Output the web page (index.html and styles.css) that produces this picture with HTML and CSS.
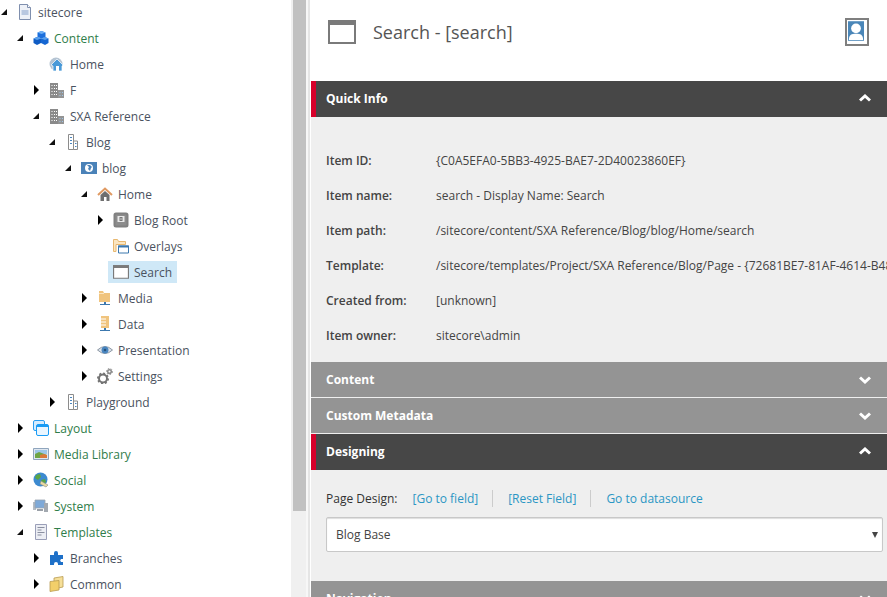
FILE: index.html
```html
<!DOCTYPE html>
<html lang="en">
  <head>
    <meta charset="UTF-8" />
    <title>Search - [search]</title>
    <link rel="stylesheet" href="styles.css">
  </head>
  <body>
    <div class="shell">
      <div class="tree">
        <div class="row"><span class="tog open"></span><svg class="ico" viewBox="0 0 16 16"><path d="M2.500 .5h8l3 3v12h-11z" fill="#eef1f7" stroke="#7f8fae"/><path d="M10.500 .5v3h3" fill="#fff" stroke="#7f8fae"/><path d="M4.500 6h7v5h-7z" fill="#b9c8e0"/></svg><span class="lbl">sitecore</span></div>
        <div class="row d1"><span class="tog open"></span><svg class="ico" viewBox="0 0 16 16"><path d="M4.500 2.500L8.500 1l4 1.500v4.500l-4 1.500-4-1.500z" fill="#1c6fdc"/><path d="M4.500 2.500L8.500 1l4 1.500-4 1.500z" fill="#6db0f5"/><path d="M.5 8.500L4 7l4 1.500V13l-4 2-3.500-2z" fill="#0f5cc4"/><path d="M.5 8.500L4 7l4 1.500L4 10z" fill="#5aa2ee"/><path d="M8 8.500L12 7l3.500 1.500V13L12 15l-4-2z" fill="#1566d2"/><path d="M8 8.500L12 7l3.500 1.500L12 10z" fill="#5aa2ee"/></svg><span class="lbl green">Content</span></div>
        <div class="row d2"><span class="tog"></span><svg class="ico" viewBox="0 0 16 16"><circle cx="7" cy="8" r="6.500" fill="#b5c4d3"/><path d="M2 9l6-6 6 6-1 1v5H4v-5z" fill="#4a9ad8" stroke="#fff" stroke-width=".7"/><path d="M7 10h3v5H7z" fill="#fff"/></svg><span class="lbl">Home</span></div>
        <div class="row d2"><span class="tog shut"></span><svg class="ico" viewBox="0 0 16 16"><use href="#bldg"/></svg><span class="lbl">F</span></div>
        <div class="row d2"><span class="tog open"></span><svg class="ico" viewBox="0 0 16 16"><use href="#bldg"/></svg><span class="lbl">SXA Reference</span></div>
        <div class="row d3"><span class="tog open"></span><svg class="ico" viewBox="0 0 16 16"><path d="M3.500 .5h5v15h-5zM8.500 7h4v8.500h-4z" fill="#fff" stroke="#8c8c8c"/><path d="M5 3h2v1H5zM5 6h2v1H5zM5 9h2v1H5zM10 9h1.500v1H10zM10 12h1.500v1H10z" fill="#4a86c0"/></svg><span class="lbl">Blog</span></div>
        <div class="row d4"><span class="tog open"></span><svg class="ico wide" viewBox="0 0 16 12"><path d="M0 0h16v12H0z" fill="#4a82b8"/><circle cx="8" cy="6" r="4" fill="#fff"/><path d="M6 3l2 2-1 2 2 2 1-3 1-1-2-2z" fill="#4a82b8"/></svg><span class="lbl">blog</span></div>
        <div class="row d5"><span class="tog open"></span><svg class="ico" viewBox="0 0 16 16"><path d="M1 9l7-6.500L15 9" fill="none" stroke="#e09a62" stroke-width="2"/><path d="M3.500 9L8 5l4.500 4v6h-9z" fill="#6f6f6f"/><path d="M7 11h2.500v4H7z" fill="#fff"/></svg><span class="lbl">Home</span></div>
        <div class="row d6"><span class="tog shut"></span><svg class="ico" viewBox="0 0 16 16"><rect x="1.500" y="1.500" width="13" height="13" rx="1.500" fill="#8c8c8c" stroke="#808080" stroke-width="2"/><path d="M4.500 4h7v6h-7z" fill="#e8e8e8"/><path d="M6.500 5h3v4h-3z" fill="#777"/><path d="M7.500 6h1v.7h-1zM7.500 7.300h1V8h-1z" fill="#e8e8e8"/></svg><span class="lbl">Blog Root</span></div>
        <div class="row d6"><span class="tog"></span><svg class="ico" viewBox="0 0 16 16"><path d="M.5 1.500h4l1 2h7v3H3v7H.5z" fill="#fbe6c2" stroke="#e8b870"/><path d="M5.500 8h10v7h-10z" fill="#fff" stroke="#3c78ae"/><path d="M5 7.500h11v2H5z" fill="#3c78ae"/></svg><span class="lbl">Overlays</span></div>
        <div class="row d6"><span class="tog"></span><span class="selected"><svg class="ico" viewBox="0 0 16 16"><use href="#win"/></svg><span class="lbl">Search</span></span></div>
        <div class="row d5"><span class="tog shut"></span><svg class="ico" viewBox="0 0 16 16"><path d="M2 1h4l1 2h6v9H2z" fill="#f0c47e"/><path d="M2 3h5v1H2z" fill="#fbe6c2"/><path d="M7 12h2v2H7zM3 14h10v1H3z" fill="#3c78ae"/></svg><span class="lbl">Media</span></div>
        <div class="row d5"><span class="tog shut"></span><svg class="ico" viewBox="0 0 16 16"><path d="M4 0h8v12H4z" fill="#f0c47e"/><path d="M4 3h5M4 6h5M4 9h5" stroke="#fff"/><path d="M7 12h2v2H7zM3 14h10v1H3z" fill="#3c78ae"/></svg><span class="lbl">Data</span></div>
        <div class="row d5"><span class="tog shut"></span><svg class="ico" viewBox="0 0 16 16"><path d="M.5 8Q8 1 15.500 8 8 15 .5 8z" fill="#dde3ea" stroke="#8a96a3"/><circle cx="8" cy="8" r="3.500" fill="#4a86c0"/><circle cx="8" cy="8" r="1.300" fill="#26527c"/></svg><span class="lbl">Presentation</span></div>
        <div class="row d5"><span class="tog shut"></span><svg class="ico" viewBox="0 0 16 16"><circle cx="6" cy="10.500" r="4" fill="none" stroke="#737373" stroke-width="2"/><circle cx="6" cy="10.500" r="5.200" fill="none" stroke="#737373" stroke-width="1.600" stroke-dasharray="2 2"/><circle cx="12.500" cy="3.500" r="1.800" fill="none" stroke="#8a8a8a" stroke-width="1.500"/><circle cx="12.500" cy="3.500" r="3" fill="none" stroke="#8a8a8a" stroke-width="1" stroke-dasharray="1.500 1.500"/></svg><span class="lbl">Settings</span></div>
        <div class="row d3"><span class="tog shut"></span><svg class="ico" viewBox="0 0 16 16"><path d="M3.500 .5h5v15h-5zM8.500 7h4v8.500h-4z" fill="#fff" stroke="#8c8c8c"/><path d="M5 3h2v1H5zM5 6h2v1H5zM5 9h2v1H5zM10 9h1.500v1H10zM10 12h1.500v1H10z" fill="#4a86c0"/></svg><span class="lbl">Playground</span></div>
        <div class="row d1"><span class="tog shut"></span><svg class="ico" viewBox="0 0 16 16"><rect x=".5" y=".5" width="11" height="10" rx="1.500" fill="#d5ecff" stroke="#2a9df0"/><rect x="3.500" y="4.500" width="12" height="11" rx="1.500" fill="#eaf6ff" stroke="#1a9cf5"/><path d="M4 5h11v2H4z" fill="#1a9cf5"/></svg><span class="lbl green">Layout</span></div>
        <div class="row d1"><span class="tog shut"></span><svg class="ico" viewBox="0 0 16 16"><path d="M.5 2.500h15v11H.5z" fill="#dfe7f0" stroke="#8fa5bd"/><path d="M2 4h12v4H2z" fill="#9cc6e8"/><path d="M2 8l4-2 8 3v3H2z" fill="#6fa544"/><path d="M7 9l4-1 3 1v3H7z" fill="#d9783a"/></svg><span class="lbl green">Media Library</span></div>
        <div class="row d1"><span class="tog shut"></span><svg class="ico" viewBox="0 0 16 16"><circle cx="7.500" cy="7.500" r="7" fill="#3c8ad0"/><path d="M3 3l4-1 1 3-3 3-3-2zM8 8l4-1 1 3-3 3z" fill="#5aa544"/><path d="M8 9l7 4-2 2-6-3z" fill="#e8d9a0" stroke="#8c8c8c" stroke-width=".6"/></svg><span class="lbl green">Social</span></div>
        <div class="row d1"><span class="tog shut"></span><svg class="ico" viewBox="0 0 16 16"><path d="M0 4h3v8H0z" fill="#b5bcc4"/><path d="M2 2h10v8H2z" fill="#7ea9d8" stroke="#9aa5b0" stroke-width=".8"/><path d="M11 5h4v9h-4z" fill="#a3a9b0"/><path d="M4 11h6v2H4z" fill="#9aa0a8"/></svg><span class="lbl green">System</span></div>
        <div class="row d1"><span class="tog open"></span><svg class="ico" viewBox="0 0 16 16"><path d="M2.500 .5h11v15h-11z" fill="#eceef4" stroke="#9a9fb8"/><path d="M4.500 3.500h7M4.500 6h4M4.500 8.500h7M4.500 11h4" stroke="#8a8fa0"/></svg><span class="lbl green">Templates</span></div>
        <div class="row d2"><span class="tog shut"></span><svg class="ico" viewBox="0 0 16 16"><path d="M1 5h4V3a2 2 0 0 1 4 0v2h5v4h-2a2 2 0 0 0 0 3h2v3H9v-1a2 2 0 0 0-4 0v1H1z" fill="#1e70c8"/></svg><span class="lbl">Branches</span></div>
        <div class="row d2"><span class="tog shut"></span><svg class="ico" viewBox="0 0 16 16"><path d="M5 2l9-1.500V11L5 13z" fill="#f6df98" stroke="#b89a50" stroke-width=".8"/><path d="M1 5.500l9-1V14l-9 1.500z" fill="#f2cf6a" stroke="#b89a50" stroke-width=".8"/></svg><span class="lbl">Common</span></div>
      </div>

      <div class="track"><div class="thumb"></div></div>
      <div class="splitter"></div>

      <div class="main">
        <div class="head">
          <svg class="head-ico" viewBox="0 0 28 24"><use href="#win"/></svg>
          <h1>Search - [search]</h1>
          <div class="avatar">
            <svg viewBox="0 0 18 22"><path d="M0 0h18v22H0z" fill="#4a86b8"/><circle cx="9" cy="8" r="5.500" fill="#fff"/><path d="M1 21c0-6 3-7 8-7s8 1 8 7z" fill="#fff"/></svg>
          </div>
        </div>

        <div class="bar active"><span>Quick Info</span><svg class="chev" viewBox="0 0 12 8"><path d="M1 6.500L6 2l5 4.500"/></svg></div>
        <div class="info">
          <div class="info-row"><b>Item ID:</b><span>{C0A5EFA0-5BB3-4925-BAE7-2D40023860EF}</span></div>
          <div class="info-row"><b>Item name:</b><span>search - Display Name: Search</span></div>
          <div class="info-row"><b>Item path:</b><span>/sitecore/content/SXA Reference/Blog/blog/Home/search</span></div>
          <div class="info-row"><b>Template:</b><span>/sitecore/templates/Project/SXA Reference/Blog/Page - {72681BE7-81AF-4614-B48</span></div>
          <div class="info-row"><b>Created from:</b><span>[unknown]</span></div>
          <div class="info-row"><b>Item owner:</b><span>sitecore\admin</span></div>
        </div>
        <div class="bar"><span>Content</span><svg class="chev" viewBox="0 0 12 8"><path d="M1 1.500L6 6l5-4.500"/></svg></div>
        <div class="bar"><span>Custom Metadata</span><svg class="chev" viewBox="0 0 12 8"><path d="M1 1.500L6 6l5-4.500"/></svg></div>
        <div class="bar active"><span>Designing</span><svg class="chev" viewBox="0 0 12 8"><path d="M1 6.500L6 2l5 4.500"/></svg></div>
        <div class="design">
          <div class="field-links">
            <span class="field-name">Page Design:</span>
            <a>[Go to field]</a>
            <a class="sep">[Reset Field]</a>
            <a class="sep">Go to datasource</a>
          </div>
          <div class="select"><span>Blog Base</span><i class="caret"></i></div>
        </div>
        <div class="bar"><span>Navigation</span><svg class="chev" viewBox="0 0 12 8"><path d="M1 1.500L6 6l5-4.500"/></svg></div>
      </div>
    </div>

    <svg class="defs" width="0" height="0">
      <symbol id="win" viewBox="0 0 28 24"><path d="M1 1h26v22H1z" fill="#fff" stroke="#7a7a7a" stroke-width="2"/><path d="M0 0h28v5H0z" fill="#7a7a7a"/></symbol>
      <symbol id="bldg" viewBox="0 0 16 16"><path d="M1 1h8v15H1z" fill="#8a8a8a"/><path d="M9 8h6v8H9z" fill="#949494"/><path d="M2.500 3h1v1h-1zM5 3h1v1H5zM7 3h1v1H7zM2.500 6h1v1h-1zM5 6h1v1H5zM7 6h1v1H7zM2.500 9h1v1h-1zM5 9h1v1H5zM7 9h1v1H7zM2.500 12h1v1h-1zM5 12h1v1H5zM7 12h1v1H7z" fill="#fff"/><path d="M10.500 10h1v1h-1zM13 10h1v1h-1zM10.500 13h1v1h-1zM13 13h1v1h-1z" fill="#9cc4e8"/></symbol>
    </svg>
  </body>
</html>
```

FILE: styles.css
```css
html,
body {
  margin: 0;
  height: 597px;
  overflow: hidden;
}
body {
  font-family: "Open Sans", "Noto Sans", sans-serif;
  font-size: 12px;
  color: #444;
  background: #fff;
}
.shell {
  display: flex;
  height: 597px;
}
.defs {
  display: none;
}

/* tree */
.tree {
  width: 291px;
  flex: none;
  margin-top: -1px;
  overflow: hidden;
}
.row {
  display: flex;
  align-items: center;
  height: 26px;
  white-space: nowrap;
}
.d1 { padding-left: 16px; }
.d2 { padding-left: 32px; }
.d3 { padding-left: 48px; }
.d4 { padding-left: 64px; }
.d5 { padding-left: 80px; }
.d6 { padding-left: 96px; }
.tog {
  width: 12px;
  height: 10px;
  margin-left: 1px;
  margin-right: 4px;
  flex: none;
  position: relative;
}
.tog.shut::before {
  content: "";
  position: absolute;
  left: 1px;
  top: 0;
  border-left: 5px solid #000;
  border-top: 5px solid transparent;
  border-bottom: 5px solid transparent;
}
.tog.open::before {
  content: "";
  position: absolute;
  left: 0;
  top: 2px;
  border-right: 6px solid #111;
  border-top: 6px solid transparent;
}
.ico {
  width: 16px;
  height: 16px;
  flex: none;
}
.ico.wide {
  height: 12px;
}
.lbl {
  margin-left: 5px;
  color: #4a5260;
}
.lbl.green {
  color: #2f7d4a;
}
.selected {
  display: flex;
  align-items: center;
  height: 22px;
  width: 69px;
  margin-left: -5px;
  padding-left: 5px;
  box-sizing: border-box;
  background: #cfe8f7;
}

/* splitter */
.track {
  width: 15px;
  flex: none;
  background: #f0f0f0;
  padding-left: 2px;
  box-sizing: border-box;
}
.thumb {
  width: 13px;
  height: 511px;
  background: #c1c1c1;
}
.splitter {
  width: 2px;
  flex: none;
  margin-right: 1px;
  background: #f7f7f7;
  border-right: 2px solid #e5e5e5;
}

/* content */
.main {
  flex: none;
  width: 576px;
  overflow: hidden;
  background: #efefef;
}
.head {
  display: flex;
  align-items: center;
  height: 81px;
  padding: 0 18px 17px 17px;
  box-sizing: border-box;
  background: #fff;
}
.head-ico {
  width: 28px;
  height: 24px;
  flex: none;
}
h1 {
  margin: 0 0 0 17px;
  flex: 1;
  font-size: 18px;
  font-weight: 400;
  color: #555;
}
.avatar {
  width: 24px;
  height: 28px;
  box-sizing: border-box;
  border: 2px solid #7f7f7f;
  padding: 1px;
  background: #fff;
}
.avatar svg {
  display: block;
  width: 16px;
  height: 20px;
}
.bar {
  display: flex;
  align-items: center;
  justify-content: space-between;
  height: 35px;
  margin-bottom: 1px;
  padding: 0 16px 0 15px;
  background: #949494;
  color: #fff;
  font-weight: 700;
  box-sizing: border-box;
}
.bar.active {
  height: 36px;
  margin-bottom: 0;
  padding-left: 10px;
  padding-bottom: 2px;
  background: #474747;
  border-left: 5px solid #d6002a;
}
.chev {
  width: 12px;
  height: 8px;
  fill: none;
  stroke: #fff;
  stroke-width: 3;
}
.info {
  height: 245px;
  padding: 35px 15px 0;
  box-sizing: border-box;
}
.info-row {
  display: flex;
  height: 35px;
  white-space: nowrap;
}
.info-row b {
  width: 110px;
  flex: none;
  font-weight: 600;
}
.design {
  height: 111px;
  padding: 19px 4px 0 15px;
  box-sizing: border-box;
}
.field-links {
  display: flex;
  align-items: center;
  height: 18px;
}
.field-name {
  color: #333;
  margin-right: 15px;
}
.field-links a {
  color: #2a96c4;
}
.field-links a.sep {
  margin-left: 14px;
  padding-left: 15px;
  border-left: 1px solid #ccc;
}
.select {
  display: flex;
  align-items: center;
  justify-content: space-between;
  height: 35px;
  margin-top: 10px;
  padding: 0 4px 0 9px;
  box-sizing: border-box;
  background: #fff;
  border: 1px solid #c8c8c8;
  border-radius: 2px;
  box-shadow: inset 0 1px 1px #ddd;
}
.caret {
  border-top: 6px solid #444;
  border-left: 3px solid transparent;
  border-right: 3px solid transparent;
}
```
